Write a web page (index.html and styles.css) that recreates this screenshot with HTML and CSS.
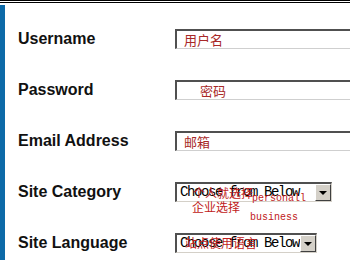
FILE: index.html
```html
<!DOCTYPE html>
<html lang="en">
<head>
    <meta charset="UTF-8">
    <title>Register Site</title>
    <link rel="stylesheet" href="styles.css">
</head>
<body>

<div class="topline"></div>

<form class="signup">
    <div class="row">
        <label for="username">Username</label>
        <input type="text" id="username" value="用户名">
    </div>

    <div class="row">
        <label for="password">Password</label>
        <input type="text" id="password" class="indent" value="密码">
    </div>

    <div class="row">
        <label for="email">Email Address</label>
        <input type="text" id="email" value="邮箱">
    </div>

    <div class="row">
        <label for="category">Site Category</label>
        <span class="select-box wide">
            <select id="category">
                <option>Choose from Below</option>
                <option>personall</option>
                <option>business</option>
            </select>
            <span class="arrow"></span>
            <span class="note cn" id="note-personal">个人就选择</span>
            <span class="note en" id="note-personall">personall</span>
            <span class="note cn" id="note-business">企业选择</span>
            <span class="note en" id="note-business-en">business</span>
        </span>
    </div>

    <div class="row">
        <label for="language">Site Language</label>
        <span class="select-box narrow">
            <select id="language">
                <option>Choose from Below</option>
            </select>
            <span class="arrow"></span>
            <span class="note cn" id="note-language">站点使用语言</span>
        </span>
    </div>
</form>

</body>
</html>
```

FILE: styles.css
```css
/* Reset some default styles */
* {
    box-sizing: border-box;
    margin: 0;
    padding: 0;
}

body {
    font-family: "Liberation Sans", Arial, sans-serif;
    background-color: #ffffff;
    overflow: hidden;
}

.topline {
    height: 5px;
    border-top: 3px double #000000;
}

.signup {
    border-left: 5px solid #0d6aa8;
    padding: 8px 0 0 13px;
}

.row {
    display: flex;
    align-items: center;
    height: 51px;
}

.row label {
    width: 157px;
    flex: none;
    font-size: 16px;
    font-weight: bold;
    color: #111111;
}

input[type="text"] {
    flex: none;
    width: 200px;
    height: 20px;
    padding: 0 0 0 7px;
    border-top: 2px solid #505050;
    border-left: 2px solid #505050;
    border-bottom: 1px solid #cfcfcf;
    border-right: 1px solid #cfcfcf;
    font-family: "Noto Sans CJK SC", sans-serif;
    font-size: 13px;
    color: #a82828;
    background-color: #ffffff;
}

input.indent {
    padding-left: 23px;
}

.select-box {
    position: relative;
    display: inline-block;
    flex: none;
}

.select-box select {
    appearance: none;
    -webkit-appearance: none;
    display: block;
    height: 20px;
    padding: 0 0 0 3px;
    border-top: 2px solid #505050;
    border-left: 2px solid #505050;
    border-bottom: 1px solid #d4d0c8;
    border-right: 1px solid #d4d0c8;
    border-radius: 0;
    background-color: #ffffff;
    font-family: "Liberation Mono", "Courier New", monospace;
    font-size: 14px;
    letter-spacing: -1.4px;
    color: #000000;
}

.wide select {
    width: 157px;
}

.narrow select {
    width: 142px;
}

.arrow {
    position: absolute;
    top: 2px;
    right: 1px;
    bottom: 1px;
    width: 16px;
    background-color: #d4d0c8;
    border-top: 1px solid #ffffff;
    border-left: 1px solid #ffffff;
    border-right: 1px solid #404040;
    border-bottom: 1px solid #404040;
}

.arrow::after {
    content: "";
    position: absolute;
    left: 3px;
    top: 6px;
    border-left: 4px solid transparent;
    border-right: 4px solid transparent;
    border-top: 4px solid #000000;
}

.note {
    position: absolute;
    color: #c02020;
    white-space: nowrap;
    line-height: 12px;
}

.note.cn {
    font-family: "Noto Sans CJK SC", sans-serif;
    font-size: 12px;
}

.note.en {
    font-family: "Liberation Mono", "Courier New", monospace;
    font-size: 10px;
}

#note-personal {
    left: 18px;
    top: 5px;
}

#note-personall {
    left: 77px;
    top: 11px;
}

#note-business {
    left: 17px;
    top: 19px;
}

#note-business-en {
    left: 75px;
    top: 30px;
}

#note-language {
    left: 10px;
    top: 4px;
}
```
